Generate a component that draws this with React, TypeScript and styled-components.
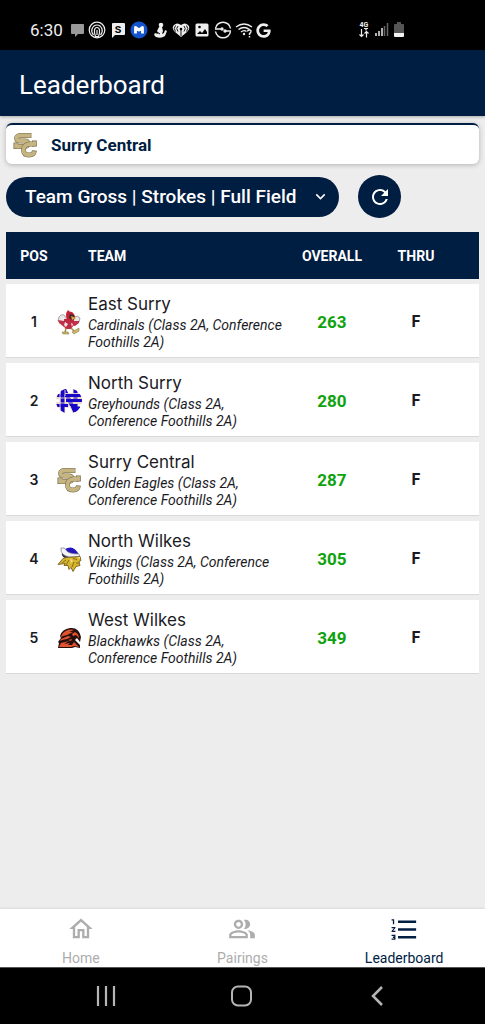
import React from 'react';
import styled, { createGlobalStyle } from 'styled-components';
import {
  MdFormatListNumbered,
  MdOutlineHome,
  MdOutlinePeopleAlt,
  MdRefresh,
  MdKeyboardArrowDown,
} from 'react-icons/md';
import { FaGoogle } from 'react-icons/fa';

const navy = '#001d42';

const GlobalStyle = createGlobalStyle`
  *, *::before, *::after { box-sizing: border-box; }
  body { margin: 0; background: #ededed; font-family: Roboto, sans-serif; color: #1b1b1f; }
  button, select { font: inherit; }
  svg { display: block; flex: none; }
`;

const Screen = styled.div`
  display: flex;
  flex-direction: column;
  min-height: 100vh;
`;

const StatusBar = styled.div`
  display: flex;
  align-items: center;
  height: 50px;
  padding: 10px 80px 0 30px;
  background: #000;
  color: #eee;
`;

const Clock = styled.time`
  width: 40px;
  font-size: 17px;
  line-height: 20px;
  white-space: nowrap;
`;

const StatusIcons = styled.div`
  display: flex;
  align-items: center;
  gap: 3px;
`;

const SignalIcons = styled(StatusIcons)`
  margin-left: auto;
  gap: 1px;
`;

const Header = styled.header`
  display: flex;
  align-items: center;
  height: 66px;
  padding: 4px 19px 0;
  background: ${navy};
  color: #fff;
  box-shadow: 0 1px 3px rgba(0, 0, 0, 0.3);
`;

const Title = styled.h1`
  margin: 0;
  font-size: 26px;
  line-height: 32px;
  font-weight: 400;
`;

const Main = styled.main`
  flex: 1;
  padding: 7px 6px 0;
`;

const TeamCard = styled.section`
  display: flex;
  align-items: center;
  gap: 13px;
  height: 41px;
  padding: 0 6px;
  border-top: 2px solid ${navy};
  border-radius: 6px;
  background: #fff;
  box-shadow: 0 1px 5px rgba(0, 0, 0, 0.25);
`;

const TeamCardName = styled.h2`
  margin: 0;
  font-size: 17px;
  line-height: 20px;
  font-weight: 700;
  color: ${navy};
`;

const Toolbar = styled.div`
  display: flex;
  align-items: center;
  gap: 19px;
  padding: 11px 0 14px;
`;

const SelectWrap = styled.div`
  display: grid;
  align-items: center;
  color: #fff;

  > * { grid-area: 1 / 1; }
  > svg { justify-self: end; margin-right: 9px; pointer-events: none; }
`;

const FilterSelect = styled.select`
  appearance: none;
  width: 333px;
  height: 40px;
  padding: 0 40px 0 19px;
  border: 0;
  border-radius: 20px;
  background: ${navy};
  color: #fff;
  font-size: 19px;
  font-weight: 500;
`;

const RefreshButton = styled.button`
  display: grid;
  place-items: center;
  width: 43px;
  height: 43px;
  padding: 0;
  border: 0;
  border-radius: 50%;
  background: ${navy};
  color: #fff;
`;

const Table = styled.table`
  width: 100%;
  table-layout: fixed;
  border-collapse: separate;
  border-spacing: 0 5px;
  margin-top: -5px;
`;

const HeadCell = styled.th<{ $align?: string; $width?: string }>`
  width: ${(p) => p.$width ?? 'auto'};
  height: 47px;
  padding: 0;
  background: ${navy};
  color: #fff;
  font-size: 14px;
  line-height: 20px;
  font-weight: 700;
  text-align: ${(p) => p.$align ?? 'center'};
`;

const PositionHead = styled(HeadCell)`
  padding-left: 6px;
`;

const Cell = styled.td`
  height: 74px;
  padding: 2px 0 0;
  background: #fff;
  border-bottom: 1px solid #d9d9d9;
  text-align: center;
`;

const Position = styled(Cell)`
  padding-left: 6px;
  font-family: Inter, sans-serif;
  font-size: 14px;
  font-weight: 600;
`;

const TeamCell = styled(Cell)`
  text-align: left;
`;

const Score = styled(Cell)`
  color: #0ea30e;
  font-size: 17px;
  font-weight: 700;
`;

const Thru = styled(Cell)`
  font-size: 16px;
  font-weight: 700;
`;

const TeamName = styled.div`
  font-family: Inter, sans-serif;
  font-size: 17px;
  line-height: 22px;
`;

const TeamDetail = styled.div`
  margin-top: 2px;
  font-size: 14px;
  line-height: 17px;
  font-style: italic;
`;

const BottomNav = styled.nav`
  display: grid;
  grid-template-columns: repeat(3, 1fr);
  height: 58px;
  background: #fff;
  box-shadow: 0 -1px 2px rgba(0, 0, 0, 0.08);
`;

const NavLink = styled.a<{ $active?: boolean }>`
  display: flex;
  flex-direction: column;
  align-items: center;
  justify-content: space-between;
  padding: 5px 0 0;
  font-size: 14px;
  line-height: 18px;
  text-decoration: none;
  color: ${(p) => (p.$active ? navy : '#adadad')};
`;

const NavIcon = styled.span`
  display: grid;
  place-items: center;
  height: 30px;
`;

const SystemBar = styled.div`
  display: flex;
  align-items: center;
  justify-content: space-between;
  height: 57px;
  padding: 0 91px 0 90px;
  border-top: 1px solid #555;
  background: #000;
`;

const SystemButton = styled.button`
  padding: 0;
  border: 0;
  background: none;
`;

const SurryCentral = () => (
  <svg width="26" height="26" viewBox="0 0 26 26" fill="none" aria-hidden="true">
    <path d="M17 6V3.500H9Q4.500 3.500 4.500 6.300T9 9H12.500Q16 9 16 11.800T12.500 14.500H5" stroke="#75694a" strokeWidth="4.800" />
    <path d="M1.500 10.500h5v6.500h-5zM20 8.500h4.800v6H20z" fill="#75694a" />
    <path d="M17 5.500V3.500H9Q4.500 3.500 4.500 6.300T9 9H12.500Q16 9 16 11.800T12.500 14.500H5" stroke="#c6b581" strokeWidth="3.800" />
    <path d="M2.200 11.200h3.800v5.200H2.200z" fill="#c6b581" />
    <path d="M22.500 12H17Q11.500 13 11.500 18T17 23Q22 23 22.500 18.500" stroke="#75694a" strokeWidth="4.800" />
    <path d="M22.500 12H17Q11.500 13 11.500 18T17 23Q21.800 23 22.300 19.200" stroke="#c6b581" strokeWidth="3.800" />
    <path d="M20.700 9.200h3.500v4.600h-3.500z" fill="#c6b581" />
  </svg>
);

const EastSurry = () => (
  <svg width="26" height="26" viewBox="0 0 26 26" aria-hidden="true">
    <path d="M3 8q3-4 6-1l2 4-3 3-6-2z" fill="#ece7e7" stroke="#8d7b7b" strokeWidth="0.700" />
    <path d="M18 8q4-2 6 1l-1 4-4 0-3-2z" fill="#ece7e7" stroke="#8d7b7b" strokeWidth="0.700" />
    <path d="M2 11l6 1 3 3-3 3-5-4zM23 12l-5 0-2 4 3 1 4-3z" fill="#c0324a" />
    <path d="M8 10l10 0 0 6-3 4H9l-1-4z" fill="#bd2c42" />
    <path d="M10 7q0-4 2-6 1 2 4 2 3 2 3 6l-3 3-5-1z" fill="#c12338" />
    <path d="M14 5l4 1 1 4-3 1-3-2z" fill="#4a2422" />
    <path d="M15 7l5 2-4 2z" fill="#d6a83c" />
    <path d="M9 13l3 2-2 3-2-2zM15 14l2 1-1 3z" fill="#eee2e2" />
    <path d="M10 19l-1 5M15 19l3 3" stroke="#a38c49" strokeWidth="1.500" />
    <path d="M6 23l6 0 1 2-6 0zM16 23l7-4 0 3-5 3z" fill="#d3ba63" stroke="#74683f" strokeWidth="0.500" />
  </svg>
);

const NorthSurry = () => (
  <svg width="26" height="26" viewBox="0 0 26 26" fill="none" aria-hidden="true">
    <defs>
      <clipPath id="north-surry-round">
        <ellipse cx="13" cy="13" rx="13" ry="12.500" />
      </clipPath>
    </defs>
    <g clipPath="url(#north-surry-round)">
      <g stroke="#ecd9c8" strokeWidth="5.500">
        <path d="M6.500 0v26M19.500 0v26M0 8.500h26M0 17h13M13 13.500h13" />
      </g>
      <g stroke="#1806c9" strokeWidth="4">
        <path d="M6.500 1v24M19.500 1v11M8 1l11 23M19.500 16v8" />
        <path d="M0 7.500h5M9 7.500h17M0 17.500h12M10 12.500h16" strokeWidth="3.200" />
        <path d="M15 19h9l-4 6z" fill="#1806c9" strokeWidth="1" />
      </g>
      <path d="M0 10h26M9 5.500h15M0 15h10M10 15h15M4 2v22M9 2v6M14 18l3 7" stroke="#ecd9c8" strokeWidth="0.900" />
    </g>
  </svg>
);

const NorthWilkes = () => (
  <svg width="26" height="26" viewBox="0 0 26 26" aria-hidden="true">
    <path d="M9 3Q18-2 23 9l-10 0z" fill="#2416bd" />
    <path d="M5 2Q9 1 10 4q2 4 13 4l1 3-11 0Q4 9 5 2z" fill="#f4f4f7" stroke="#778" strokeWidth="0.700" />
    <path d="M6 7q2 3 7 4l-4 1q-4-2-3-5z" fill="#30304a" />
    <path d="M10 11.500l14-1 1 4-2 1 1 4-4 1-3 5-2-4-2 2-1-4-4 0 1-2-7 1 5-6z" fill="#d7b62d" stroke="#655016" strokeWidth="0.800" />
    <path d="M10 14l-4 3M13 14l-3 5M17 12.500l4 1M18 16l-2 5M20 17l3 0" stroke="#6e5813" strokeWidth="0.800" />
    <path d="M14 12l3 3-2 2zM21 11l3 0v2z" fill="#f0df8e" />
  </svg>
);

const WestWilkes = () => (
  <svg width="26" height="26" viewBox="0 0 26 26" aria-hidden="true">
    <path d="M4 11q2-7 10-8 9-1 11 9l-1 5-3-4-2 2 5 5v3l-5-1-3 1H2l1-5-1-1 3-4z" fill="#260f0d" />
    <path d="M7 8q5-5 11-3l-5 2 4 0-6 3-4 1-3 2zM19 7q4 2 4 6l-3-3-3 1-1-2zM5 14l7-3 3 1-4 2-5 1-2 1zM12 15l4-1-1 2zM3 22l2-4 8-2-5 3 6-1-2 2 4 0 2-3 5 5-5-1-3 1z" fill="#e0552f" />
  </svg>
);

const ChatIcon = () => (
  <svg width="15" height="15" viewBox="0 0 15 15" aria-hidden="true">
    <path d="M2 1h11q1 0 1 1v8q0 1-1 1H8l-3 3v-3H2q-1 0-1-1V2q0-1 1-1z" fill="#999" />
  </svg>
);

const ArcsIcon = () => (
  <svg width="18" height="18" viewBox="0 0 18 18" fill="none" stroke="#eee" strokeWidth="1.200" aria-hidden="true">
    <circle cx="9" cy="9" r="7.800" />
    <path d="M5.500 14Q3 11 4 8q1.500-4 5-4t5 4q1 3-1.500 6" />
    <path d="M7.500 15.500Q6 11 6.500 9q.5-2.500 2.500-2.500T11.500 9q.5 2-1 6.500z" />
    <path d="M9 9v5" />
  </svg>
);

const LetterBubble = () => (
  <svg width="18" height="18" viewBox="0 0 18 18" aria-hidden="true">
    <path d="M4 2h11q1 0 1 1v10q0 1-1 1H6l-3 3V3q0-1 1-1z" fill="#eee" />
    <text x="9" y="12" textAnchor="middle" fontSize="11" fontWeight="700" fontFamily="Liberation Mono, monospace" fill="#000">S</text>
  </svg>
);

const BlueBadge = () => (
  <svg width="18" height="18" viewBox="0 0 18 18" fill="none" aria-hidden="true">
    <circle cx="9" cy="9" r="8.500" fill="#1554cf" />
    <path d="M5.500 12.500V6.500L9 9l3.500-2.500v6" stroke="#fff" strokeWidth="2.800" strokeLinejoin="round" />
  </svg>
);

const PersonIcon = () => (
  <svg width="18" height="18" viewBox="0 0 18 18" fill="#eee" aria-hidden="true">
    <circle cx="10" cy="4" r="2.300" />
    <path d="M8 6h3l1 4-1 3 2-1 1-3 2 1-2 5q-4 3-9 1-3-2-1-4l3 1-1-3z" />
    <path d="M6 11l3 2" stroke="#000" />
  </svg>
);

const HeartRadio = () => (
  <svg width="18" height="18" viewBox="0 0 18 18" fill="none" aria-hidden="true">
    <path d="M9 16L3 11Q-1 7 2 4q3-3 7 0 4-3 7 0 3 3-1 7z" fill="#eee" />
    <path d="M6 10.500Q3.500 7.500 6 5M12 10.500Q14.500 7.500 12 5M3.500 10.500Q1 7.500 3.500 4.500M14.500 10.500Q17 7.500 14.500 4.500M9 9v6" stroke="#000" strokeWidth="0.900" />
    <circle cx="9" cy="8" r="1.300" fill="#000" />
  </svg>
);

const PhotoIcon = () => (
  <svg width="18" height="18" viewBox="0 0 18 18" aria-hidden="true">
    <rect x="2.500" y="2.500" width="13" height="13" rx="1.500" fill="#eee" />
    <path d="M4 13l3-3 2 2 3-4 2 3v2z" fill="#000" />
    <circle cx="6.500" cy="6" r="1.300" fill="#000" />
  </svg>
);

const SyncCircle = () => (
  <svg width="18" height="18" viewBox="0 0 18 18" fill="none" stroke="#eee" strokeWidth="1.500" aria-hidden="true">
    <path d="M1.500 7.500A7.600 7.600 0 0 1 16.500 7.500M16.500 10.500A7.600 7.600 0 0 1 1.500 10.500" />
    <path d="M1 8h6M11 10h6" />
    <circle cx="8" cy="8" r="1.700" fill="#eee" stroke="none" />
    <circle cx="11" cy="10" r="1.700" fill="#eee" stroke="none" />
  </svg>
);

const WifiUnknown = () => (
  <svg width="18" height="18" viewBox="0 0 18 18" fill="none" stroke="#eee" strokeWidth="1.400" aria-hidden="true">
    <path d="M1 6q8-6 16 0M3.500 8.500q5.500-4 11 0M6 11q3-2.500 5.500-.5" />
    <circle cx="9" cy="13" r="1.200" fill="#eee" stroke="none" />
    <path d="M12.500 10.500q0-1.500 1.800-1.500t1.700 1.500-1.500 2V14M14.500 15v1.500" />
  </svg>
);

const LteIcon = () => (
  <svg width="14" height="18" viewBox="0 0 14 18" aria-hidden="true">
    <text x="7" y="6" textAnchor="middle" fontSize="7" fontWeight="700" fontFamily="Roboto, sans-serif" fill="#eee">4G</text>
    <path d="M4.500 8v7.500M2.500 13.500l2 2 2-2M9.500 16.500v-6M7.500 12.500l2-2 2 2M7 7.500h4M9 7.500v2" fill="none" stroke="#eee" strokeWidth="1.200" />
  </svg>
);

const SignalIcon = () => (
  <svg width="20" height="18" viewBox="0 0 20 18" strokeWidth="1.500" aria-hidden="true">
    <path d="M4 15v-3M7 15v-5M10 15V7" stroke="#eee" />
    <path d="M12.500 15V5M15.500 15V2" stroke="#666" />
  </svg>
);

const BatteryIcon = () => (
  <svg width="12" height="18" viewBox="0 0 12 18" aria-hidden="true">
    <path d="M4 1h4v2h2q1 0 1 1v11H1V4q0-1 1-1h2z" fill="#555" />
    <path d="M1 12h10v3q0 1-1 1H2q-1 0-1-1z" fill="#f2f2f2" />
  </svg>
);

const teams = [
  { pos: 1, name: 'East Surry', detail: 'Cardinals (Class 2A, Conference Foothills 2A)', score: 263, Logo: EastSurry },
  { pos: 2, name: 'North Surry', detail: 'Greyhounds (Class 2A, Conference Foothills 2A)', score: 280, Logo: NorthSurry },
  { pos: 3, name: 'Surry Central', detail: 'Golden Eagles (Class 2A, Conference Foothills 2A)', score: 287, Logo: SurryCentral },
  { pos: 4, name: 'North Wilkes', detail: 'Vikings (Class 2A, Conference Foothills 2A)', score: 305, Logo: NorthWilkes },
  { pos: 5, name: 'West Wilkes', detail: 'Blackhawks (Class 2A, Conference Foothills 2A)', score: 349, Logo: WestWilkes },
];

export default function App() {
  return (
    <Screen>
      <GlobalStyle />
      <StatusBar>
        <Clock>6:30</Clock>
        <StatusIcons>
          <ChatIcon />
          <ArcsIcon />
          <LetterBubble />
          <BlueBadge />
          <PersonIcon />
          <HeartRadio />
          <PhotoIcon />
          <SyncCircle />
          <WifiUnknown />
          <FaGoogle size={15} />
        </StatusIcons>
        <SignalIcons>
          <LteIcon />
          <SignalIcon />
          <BatteryIcon />
        </SignalIcons>
      </StatusBar>
      <Header>
        <Title>Leaderboard</Title>
      </Header>
      <Main>
        <TeamCard>
          <SurryCentral />
          <TeamCardName>Surry Central</TeamCardName>
        </TeamCard>
        <Toolbar>
          <SelectWrap>
            <FilterSelect aria-label="Leaderboard view">
              <option>Team Gross | Strokes | Full Field</option>
            </FilterSelect>
            <MdKeyboardArrowDown size={19} />
          </SelectWrap>
          <RefreshButton type="button" aria-label="Refresh">
            <MdRefresh size={24} />
          </RefreshButton>
        </Toolbar>
        <Table>
          <thead>
            <tr>
              <PositionHead scope="col" $width="50px">POS</PositionHead>
              <HeadCell $width="32px" aria-label="Logo" />
              <HeadCell scope="col" $align="left">TEAM</HeadCell>
              <HeadCell scope="col" $width="84px">OVERALL</HeadCell>
              <HeadCell scope="col" $width="84px">THRU</HeadCell>
              <HeadCell $width="21px" aria-hidden="true" />
            </tr>
          </thead>
          <tbody>
            {teams.map(({ pos, name, detail, score, Logo }) => (
              <tr key={pos}>
                <Position>{pos}</Position>
                <Cell><Logo /></Cell>
                <TeamCell>
                  <TeamName>{name}</TeamName>
                  <TeamDetail>{detail}</TeamDetail>
                </TeamCell>
                <Score>{score}</Score>
                <Thru>F</Thru>
                <Cell />
              </tr>
            ))}
          </tbody>
        </Table>
      </Main>
      <BottomNav>
        <NavLink href="#home">
          <NavIcon><MdOutlineHome size={28} /></NavIcon>
          Home
        </NavLink>
        <NavLink href="#pairings">
          <NavIcon><MdOutlinePeopleAlt size={28} /></NavIcon>
          Pairings
        </NavLink>
        <NavLink href="#leaderboard" $active aria-current="page">
          <NavIcon><MdFormatListNumbered size={31} /></NavIcon>
          Leaderboard
        </NavLink>
      </BottomNav>
      <SystemBar>
        <SystemButton type="button" aria-label="Recent apps">
          <svg width="30" height="24" viewBox="0 0 30 24" stroke="#b5b5b5" strokeWidth="2.200">
            <path d="M8 2v20M16 2v20M24 2v20" />
          </svg>
        </SystemButton>
        <SystemButton type="button" aria-label="Home">
          <svg width="24" height="24" viewBox="0 0 24 24" fill="none" stroke="#b5b5b5" strokeWidth="2">
            <rect x="2" y="2.500" width="19" height="19" rx="6" />
          </svg>
        </SystemButton>
        <SystemButton type="button" aria-label="Back">
          <svg width="30" height="24" viewBox="0 0 30 24" fill="none" stroke="#b5b5b5" strokeWidth="2.500">
            <path d="M18 3L9 12l9 9" />
          </svg>
        </SystemButton>
      </SystemBar>
    </Screen>
  );
}
